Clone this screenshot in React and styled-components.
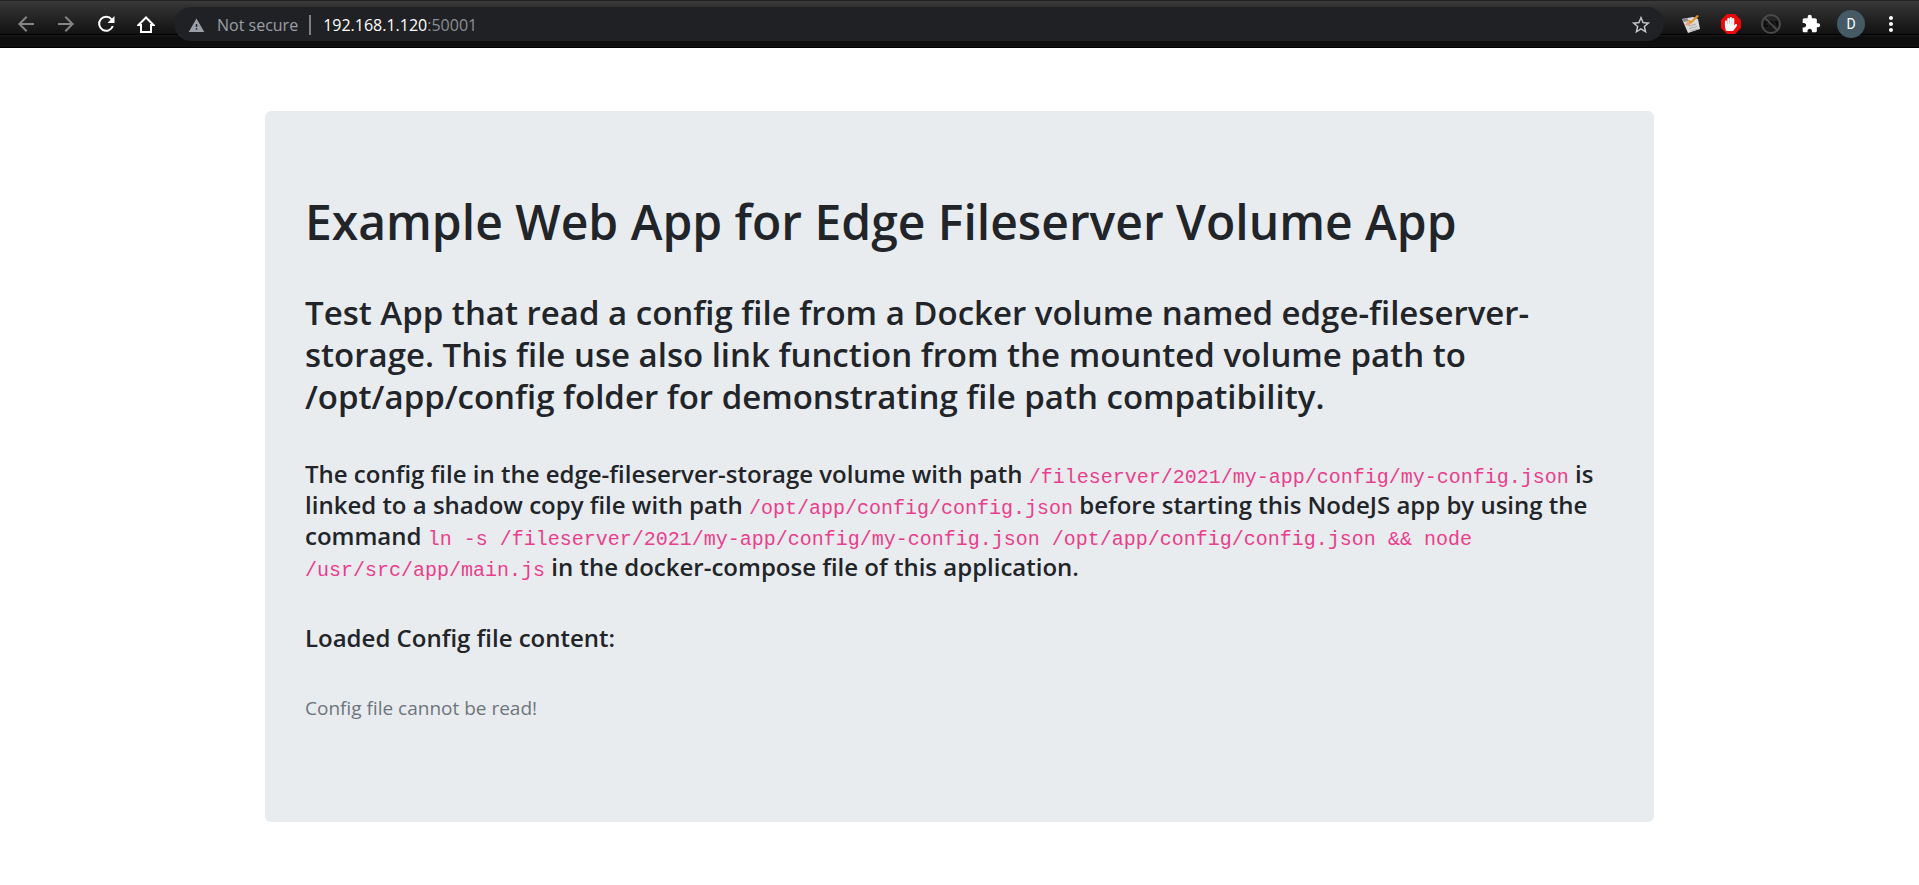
import React from "react";
import styled, { createGlobalStyle } from "styled-components";
import { MdArrowBack, MdArrowForward, MdWarning, MdStarBorder, MdExtension, MdMoreVert } from "react-icons/md";
import { FaHandPaper } from "react-icons/fa";

const GlobalStyle = createGlobalStyle`
  *, *::before, *::after { box-sizing: border-box; }
  body {
    margin: 0;
    background: #fff;
    color: #212529;
    font-family: "Open Sans", "Noto Sans", sans-serif;
  }
`;

const Toolbar = styled.header`
  display: flex;
  align-items: center;
  height: 48px;
  padding: 0 8px 0 6px;
  border-top: 1px solid #222;
  border-bottom: 1px solid #000;
  background:
    linear-gradient(#3a3a3a 0, #303030 6px, #121212 33px, #000 33px, #000 34px, #1c1c1c 34px, #0d0d0d 36px, #0f0f0f 100%);
`;

const IconButton = styled.button`
  display: flex;
  align-items: center;
  justify-content: center;
  flex: none;
  width: 40px;
  height: 32px;
  padding: 0;
  border: 0;
  background: none;
  color: ${(p) => p.$color || "#fff"};
`;

const AddressBar = styled.div`
  display: flex;
  align-items: center;
  flex: 1;
  height: 34px;
  margin: 0 7px 0 8px;
  padding: 2px 3px 0 14px;
  border-radius: 17px;
  background: #202124;
  font-size: 16px;
  line-height: 20px;
`;

const SecurityButton = styled.button`
  display: flex;
  align-items: center;
  gap: 12px;
  padding: 0 11px 0 0;
  border: 0;
  border-right: 2px solid #7c7f83;
  background: none;
  color: #9aa0a6;
  font: inherit;
`;

const Url = styled.span`
  flex: 1;
  padding-left: 12px;
  color: #8b8f94;
`;

const Host = styled.span`
  color: #fff;
`;

const Avatar = styled.span`
  display: flex;
  align-items: center;
  justify-content: center;
  width: 28px;
  height: 28px;
  border-radius: 50%;
  background: #455a64;
  color: #fff;
  font: 14px Roboto, sans-serif;
`;

const Container = styled.main`
  max-width: 1389px;
  margin: 63px auto 0;
`;

const Jumbotron = styled.section`
  display: flex;
  flex-direction: column;
  gap: 40px;
  padding: 81px 40px 99px;
  border-radius: 6px;
  background: #e9ecef;
`;

const Title = styled.h1`
  margin: 0;
  font-size: 48px;
  font-weight: 600;
  line-height: 60px;
`;

const Lead = styled.h3`
  margin: 0;
  font-size: 33px;
  font-weight: 600;
  line-height: 42px;
`;

const Detail = styled.h5`
  margin: 0;
  font-size: 24px;
  font-weight: 600;
  line-height: 31px;
`;

const Code = styled.code`
  color: #e83e8c;
  font-family: "Liberation Mono", monospace;
  font-size: 20px;
  font-weight: 400;
  line-height: 1;
`;

const Message = styled.p`
  margin: 0;
  color: #6c757d;
  font-size: 19px;
  line-height: 30px;
`;

const HomeIcon = () => (
  <svg width="18" height="18" viewBox="0 0 18 18" fill="none" stroke="currentColor" strokeWidth="2" aria-hidden="true">
    <path d="M1.500 10H4v7h10v-7h2.500L9 2.500z" />
  </svg>
);

const NotesIcon = () => (
  <svg width="20" height="20" viewBox="0 0 20 20" aria-hidden="true">
    <path d="M1 5 12 3l5 2 2 10-12 4z" fill="#dadada" />
    <path d="M8 12l7-2M8 14.500l8-2M9 17l8-2" stroke="#aaa" />
    <path d="M1 5l5-1 2 3-5 1z" fill="#8a8a8a" />
    <path d="M6 8l4 1-2 3-4-1z" fill="#e7a17f" />
    <path d="M9 10l2-1 7-7-2-1-6 6-2-1-1 1z" fill="#e0952b" />
  </svg>
);

const BlockerIcon = () => (
  <svg width="20" height="20" viewBox="0 0 20 20" aria-hidden="true">
    <path d="M6 0h8l6 6v8l-6 6H6l-6-6V6z" fill="#ea0a0a" />
    <g transform="matrix(-1 0 0 1 20 0)">
      <FaHandPaper x="3" y="3" size="14" color="#fff" />
    </g>
  </svg>
);

const DisabledIcon = () => (
  <svg width="20" height="20" viewBox="0 0 20 20" fill="none" aria-hidden="true">
    <path d="M4 8h3M4 8v4h3M9 8h3M9 10h3v2H9M14 8h2v4" stroke="#0c0c0c" strokeWidth="2" />
    <circle cx="10" cy="10" r="9" stroke="#4a4a4a" strokeWidth="2" />
    <path d="M4 4l12 12" stroke="#4a4a4a" strokeWidth="2" />
  </svg>
);

const ReloadIcon = () => (
  <svg width="18" height="18" viewBox="0 0 18 18" fill="none" aria-hidden="true">
    <path d="M14.700 4.500A7 7 0 1 0 15.800 11" stroke="currentColor" strokeWidth="2" />
    <path d="M17.500 1v7h-7z" fill="currentColor" />
  </svg>
);

export default function App() {
  return (
    <>
      <GlobalStyle />
      <Toolbar>
        <IconButton aria-label="Back" $color="#858585"><MdArrowBack size={24} /></IconButton>
        <IconButton aria-label="Forward" $color="#858585"><MdArrowForward size={24} /></IconButton>
        <IconButton aria-label="Reload"><ReloadIcon /></IconButton>
        <IconButton aria-label="Home"><HomeIcon /></IconButton>
        <AddressBar>
          <SecurityButton><MdWarning size={17} />Not secure</SecurityButton>
          <Url><Host>192.168.1.120</Host>:50001</Url>
          <IconButton aria-label="Bookmark this page" $color="#c4c7cb"><MdStarBorder size={22} /></IconButton>
        </AddressBar>
        <IconButton aria-label="Notes"><NotesIcon /></IconButton>
        <IconButton aria-label="Ad blocker"><BlockerIcon /></IconButton>
        <IconButton aria-label="Disabled extension"><DisabledIcon /></IconButton>
        <IconButton aria-label="Extensions"><MdExtension size={20} /></IconButton>
        <IconButton aria-label="Profile"><Avatar>D</Avatar></IconButton>
        <IconButton aria-label="Menu"><MdMoreVert size={24} /></IconButton>
      </Toolbar>
      <Container>
        <Jumbotron>
          <Title>Example Web App for Edge Fileserver Volume App</Title>
          <Lead>
            Test App that read a config file from a Docker volume named edge-fileserver-storage. This file use also
            link function from the mounted volume path to /opt/app/config folder for demonstrating file path
            compatibility.
          </Lead>
          <Detail>
            The config file in the edge-fileserver-storage volume with path{" "}
            <Code>/fileserver/2021/my-app/config/my-config.json</Code> is linked to a shadow copy file with path{" "}
            <Code>/opt/app/config/config.json</Code> before starting this NodeJS app by using the command{" "}
            <Code>
              ln -s /fileserver/2021/my-app/config/my-config.json /opt/app/config/config.json && node
              /usr/src/app/main.js
            </Code>{" "}
            in the docker-compose file of this application.
          </Detail>
          <Detail>Loaded Config file content:</Detail>
          <Message>Config file cannot be read!</Message>
        </Jumbotron>
      </Container>
    </>
  );
}
